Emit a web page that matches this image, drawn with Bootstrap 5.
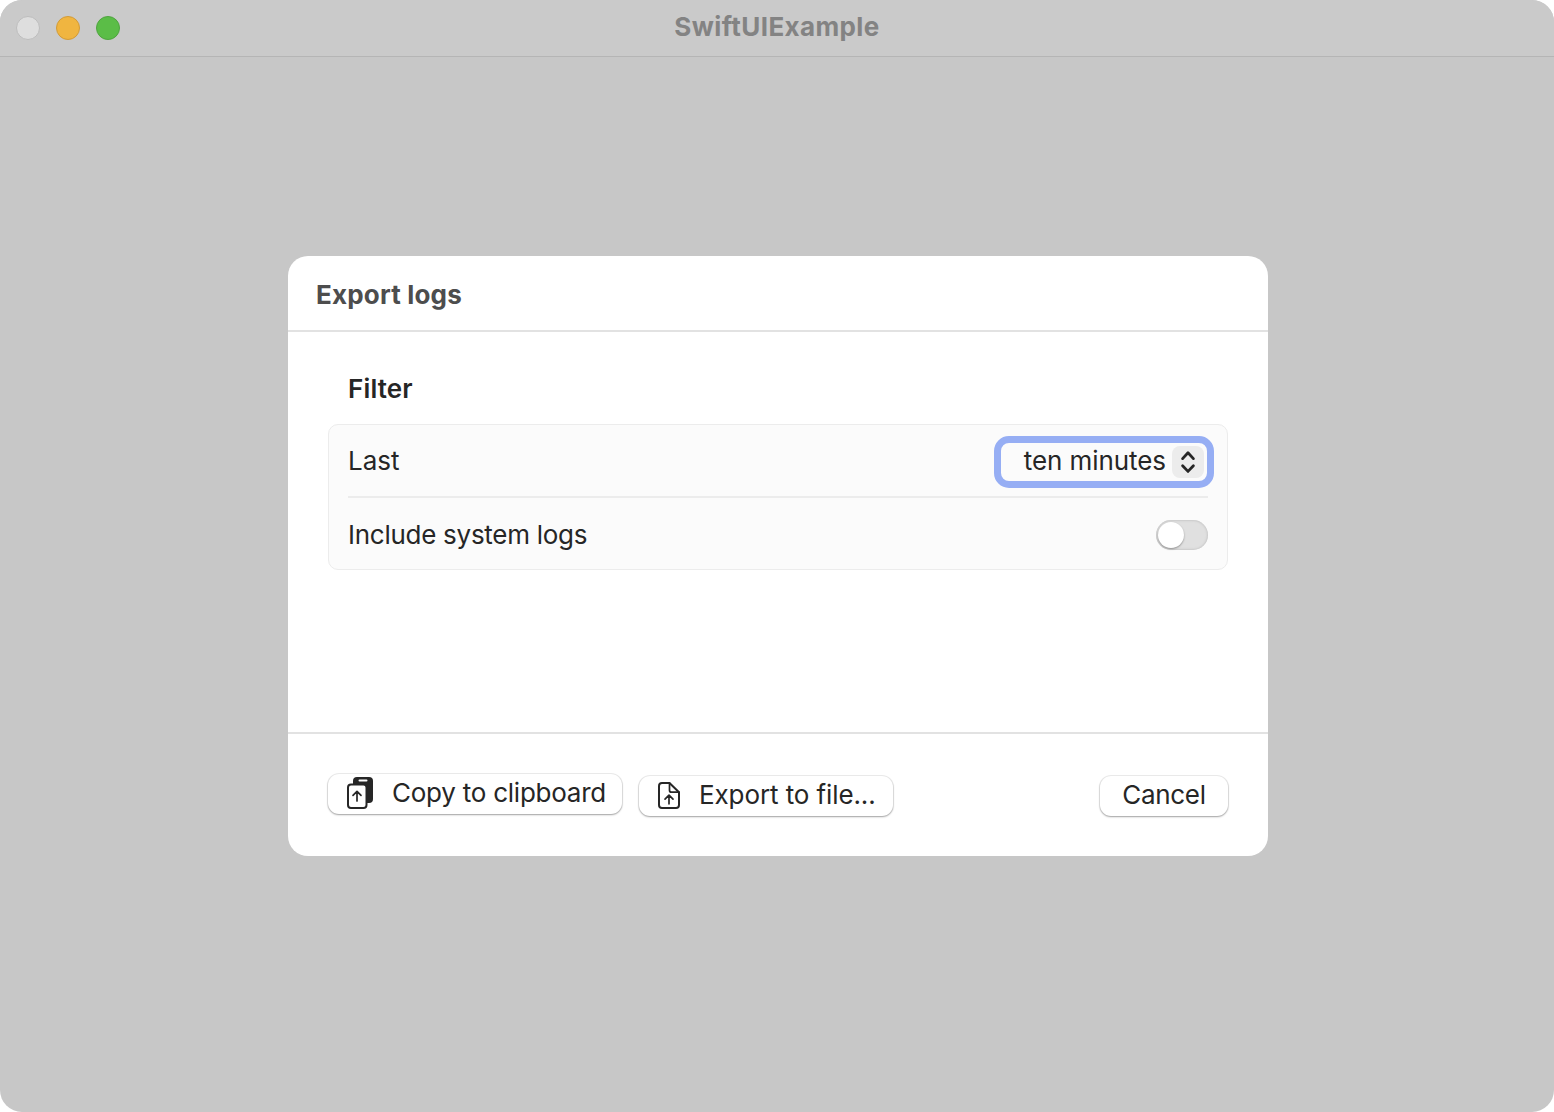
<!DOCTYPE html>
<html lang="en">
<head>
<meta charset="utf-8">
<title>SwiftUIExample</title>
<link href="https://cdn.jsdelivr.net/npm/bootstrap@5.3.0/dist/css/bootstrap.min.css" rel="stylesheet">
<style>
body{font-family:Inter,"Liberation Sans",sans-serif;font-size:26px;line-height:32px;color:#262626;background:#fff;overflow:hidden}
.app-window{height:1112px;background:#c7c7c7;border-radius:22px}
.title-bar{height:57px;background:#cacaca;border-bottom:1px solid #b5b5b5;border-radius:22px 22px 0 0;padding:0 16px}
.bar-side{width:104px}
.win-dot{width:24px;height:24px;border:1px solid}
.dot-close{background:#dedede;border-color:#bdbdbd}
.dot-min{background:#f0b540;border-color:#d29b38}
.dot-zoom{background:#5bbd47;border-color:#4fa43f}
.win-title{color:#838383;padding-bottom:3px;letter-spacing:.39px}
.sheet{width:980px;height:600px;margin:199px 0 0 288px;border-radius:20px}
.sheet-head{height:76px;padding:23px 28px 0;color:#4d4d4d;border-bottom:2px solid #e2e2e2;letter-spacing:.18px}
.sheet-main{height:400px;padding:41px 40px 0}
.sheet-foot{height:124px;padding:40px 39px 0;border-top:2px solid #e2e2e2}
.group-title{padding-left:20px;margin-bottom:19px;letter-spacing:.15px}
.group-box{height:146px;padding:0 19px;background:#fbfbfb;border:1px solid #ececec;border-radius:10px}
.row-last{height:73px;border-bottom:2px solid #ececec}
.row-system{height:72px;padding-top:2px;letter-spacing:-.27px}
.picker{width:220px;height:52px;margin-top:2px;border:7px solid #96aef4;border-radius:15px;margin-right:-6px;padding-right:3px;letter-spacing:-.08px}
.picker:focus{outline:0}
.picker-value{padding-bottom:2px}
.stepper{width:32px;height:32px;background:#ececec;border-radius:8px;margin-left:6px}
.toggle.form-check-input{width:52px;height:30px;margin:0;border:0;border-radius:15px;background:#e0e0e0;box-shadow:inset 0 0 2px 1px #c9c9c9}
.knob{width:26px;height:26px;left:2px;top:2px;background:#fff;box-shadow:0 1px 2px rgba(0,0,0,.35)}
.push{height:40px;padding:0 0 2px;background:#fff;border-radius:11px;border:0;font-size:26px;line-height:32px;color:#262626;box-shadow:0 0 0 1px rgba(0,0,0,.07),0 1px 2px rgba(0,0,0,.32)}
.push-copy{width:294px;margin-left:1px;padding-left:18px;letter-spacing:-.24px}
.push-file{width:254px;margin:2px 0 0 17px;padding-left:18px;letter-spacing:-.1px}
.push-cancel{width:128px;margin-top:2px;margin-right:1px;letter-spacing:-.3px}
.push-label{margin-left:18px}
</style>
<script src="https://cdn.jsdelivr.net/npm/bootstrap@5.3.0/dist/js/bootstrap.bundle.min.js"></script>
</head>
<body>
<div class="app-window">
  <header class="title-bar d-flex align-items-center">
    <div class="bar-side d-flex gap-3">
      <span class="win-dot dot-close rounded-circle"></span>
      <span class="win-dot dot-min rounded-circle"></span>
      <span class="win-dot dot-zoom rounded-circle"></span>
    </div>
    <div class="win-title flex-fill text-center fw-bold">SwiftUIExample</div>
    <div class="bar-side"></div>
  </header>
  <section class="sheet bg-white">
    <div class="sheet-head fw-bold">Export logs</div>
    <div class="sheet-main">
      <div class="group-title fw-semibold">Filter</div>
      <div class="group-box">
        <div class="row-last d-flex align-items-center justify-content-between">
          <span>Last</span>
          <div class="picker d-flex align-items-center justify-content-end" tabindex="0">
            <span class="picker-value">ten minutes</span>
            <span class="stepper d-flex"><svg width="32" height="32" fill="none" stroke="#262626" stroke-width="2.8" stroke-linecap="round" stroke-linejoin="round"><path d="M10.600 12.600 16 6.700 21.400 12.600M10.600 19.800 16 25.400 21.400 19.800"/></svg></span>
          </div>
        </div>
        <div class="row-system d-flex align-items-center justify-content-between">
          <span>Include system logs</span>
          <div class="toggle form-check-input position-relative" role="switch" aria-checked="false"><span class="knob position-absolute rounded-circle"></span></div>
        </div>
      </div>
    </div>
    <div class="sheet-foot d-flex align-items-start">
      <button class="btn push push-copy d-flex align-items-center">
        <svg width="28" height="34" viewBox="0 0 28 34" fill="none"><rect x="7" y="1" width="20" height="26" rx="4" fill="#262626"/><path d="M13.500 4.500h7" stroke="#fff" stroke-width="2" stroke-linecap="round"/><rect x="2" y="8.500" width="18.500" height="23.500" rx="3" fill="#fff" stroke="#262626" stroke-width="2"/><path d="M11 25V15.500M7 19.300l4-4 4 4" stroke="#262626" stroke-width="1.700" stroke-linecap="round" stroke-linejoin="round"/></svg>
        <span class="push-label">Copy to clipboard</span>
      </button>
      <button class="btn push push-file d-flex align-items-center">
        <svg width="24" height="30" viewBox="0 0 24 30" fill="none" stroke="#262626" stroke-width="2" stroke-linecap="round" stroke-linejoin="round"><path d="M12.500 3H5Q2 3 2 6V25Q2 28 5 28H19Q22 28 22 25V12.200Z"/><path d="M12.500 3V10.200Q12.500 12.200 14.500 12.200H22" stroke-width="1.700"/><path d="M12 23.800V15.500M8 19.200l4-4 4 4" stroke-width="1.700"/></svg>
        <span class="push-label">Export to file...</span>
      </button>
      <button class="btn push push-cancel ms-auto">Cancel</button>
    </div>
  </section>
</div>
</body>
</html>
